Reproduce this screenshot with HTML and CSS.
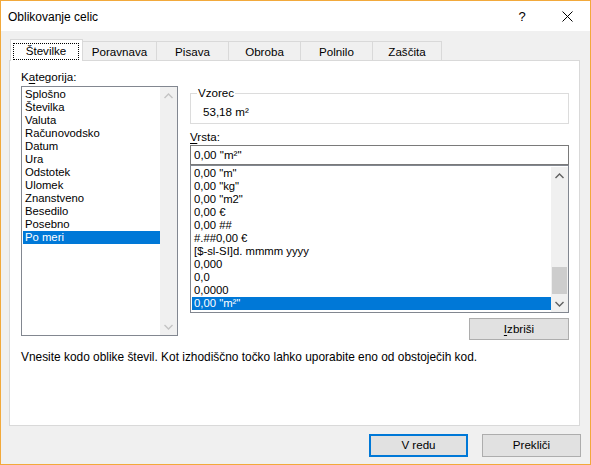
FILE: index.html
```html
<!DOCTYPE html>
<html>
<head>
<meta charset="utf-8">
<link rel="stylesheet" href="styles.css">
</head>
<body>
<div class="window">
  <div class="titlebar">
    <span class="title">Oblikovanje celic</span>
    <span class="help">?</span>
    <span class="close">
      <svg width="11" height="11" viewBox="0 0 11 11"><path d="M0.5 0.5 L10.5 10.5 M10.5 0.5 L0.5 10.5" stroke="#000" stroke-width="1" fill="none"/></svg>
    </span>
  </div>
  <div class="body">
    <div class="tabs">
      <div class="tab active"><span class="focus">Številke</span></div>
      <div class="tab w74">Poravnava</div>
      <div class="tab w72">Pisava</div>
      <div class="tab w72">Obroba</div>
      <div class="tab w72">Polnilo</div>
      <div class="tab w69">Zaščita</div>
    </div>
    <div class="panel">
      <div class="cols">
        <div class="left">
          <div class="label">K<u>a</u>tegorija:</div>
          <div class="listbox cat">
            <div class="items">
              <div class="item">Splošno</div>
              <div class="item">Številka</div>
              <div class="item">Valuta</div>
              <div class="item">Računovodsko</div>
              <div class="item">Datum</div>
              <div class="item">Ura</div>
              <div class="item">Odstotek</div>
              <div class="item">Ulomek</div>
              <div class="item">Znanstveno</div>
              <div class="item">Besedilo</div>
              <div class="item">Posebno</div>
              <div class="item sel">Po meri</div>
            </div>
            <div class="scrollbar">
              <div class="arrow"><svg width="9" height="6" viewBox="0 0 9 6"><path d="M0.5 5 L4.5 1 L8.5 5" stroke="#c4c4c4" stroke-width="1.4" fill="none"/></svg></div>
              <div class="track"></div>
              <div class="arrow"><svg width="9" height="6" viewBox="0 0 9 6"><path d="M0.5 1 L4.5 5 L8.5 1" stroke="#c4c4c4" stroke-width="1.4" fill="none"/></svg></div>
            </div>
          </div>
        </div>
        <div class="right">
          <div class="group">
            <span class="legend">Vzorec</span>
            <div class="sample">53,18 m²</div>
          </div>
          <div class="label vr"><u>V</u>rsta:</div>
          <div class="input">0,00 "m²"</div>
          <div class="listbox fmt">
            <div class="items">
              <div class="item">0,00 "m"</div>
              <div class="item">0,00 "kg"</div>
              <div class="item">0,00 "m2"</div>
              <div class="item">0,00 €</div>
              <div class="item">0,00 ##</div>
              <div class="item">#.##0,00 €</div>
              <div class="item">[$-sl-SI]d. mmmm yyyy</div>
              <div class="item">0,000</div>
              <div class="item">0,0</div>
              <div class="item">0,0000</div>
              <div class="item sel">0,00 "m²"</div>
            </div>
            <div class="scrollbar">
              <div class="arrow"><svg width="9" height="6" viewBox="0 0 9 6"><path d="M0.5 5 L4.5 1 L8.5 5" stroke="#606060" stroke-width="1.4" fill="none"/></svg></div>
              <div class="track end"><div class="thumb"></div></div>
              <div class="arrow"><svg width="9" height="6" viewBox="0 0 9 6"><path d="M0.5 1 L4.5 5 L8.5 1" stroke="#606060" stroke-width="1.4" fill="none"/></svg></div>
            </div>
          </div>
          <div class="btnrow">
            <div class="btn del"><u>I</u>zbriši</div>
          </div>
        </div>
      </div>
      <p class="desc">Vnesite kodo oblike števil. Kot izhodiščno točko lahko uporabite eno od obstoječih kod.</p>
    </div>
    <div class="buttons">
      <div class="btn default">V redu</div>
      <div class="btn">Prekliči</div>
    </div>
  </div>
</div>
</body>
</html>
```
FILE: styles.css
```css
* { box-sizing: border-box; }
html, body { margin: 0; padding: 0; }
body {
  font-family: "Liberation Sans", Arial, sans-serif;
  font-size: 11.6px;
  color: #000;
  background: #f0f0f0;
}
u { text-decoration: underline; text-underline-offset: 2px; }
.window {
  width: 591px;
  height: 465px;
  border: 1px solid #f2a93b;
  background: #f0f0f0;
  display: flex;
  flex-direction: column;
}
.titlebar {
  height: 30px;
  background: #fff;
  display: flex;
  align-items: center;
  flex-shrink: 0;
}
.title {
  margin-left: 7px;
  font-size: 12px;
  flex: 1;
  padding-top: 1px;
}
.help {
  font-size: 13px;
  width: 20px;
  text-align: center;
  margin-right: 30px;
}
.close {
  width: 13px;
  margin-right: 15px;
  display: flex;
  padding-top: 1px;
}
.body {
  flex: 1;
  display: flex;
  flex-direction: column;
}
.tabs {
  display: flex;
  align-items: flex-end;
  margin-top: 7px;
  margin-left: 9px;
  height: 22px;
}
.tab {
  height: 19px;
  border: 1px solid #d9d9d9;
  border-left: none;
  border-bottom: none;
  background: #f0f0f0;
  text-align: center;
  line-height: 16px;
  padding-top: 2px;
}
.w74 { width: 74px; }
.w72 { width: 72px; }
.w69 { width: 69px; }
.tab.active {
  width: 73px;
  height: 22px;
  border-left: 1px solid #d9d9d9;
  background: #fff;
  position: relative;
  z-index: 1;
  margin-bottom: -1px;
  padding: 3px 3px 0 2px;
  text-align: left;
}
.focus {
  display: block;
  height: 17px;
  border: 1px dotted #000;
  line-height: 14px;
  text-align: center;
}
.panel {
  margin-left: 8px;
  width: 571px;
  height: 366px;
  background: #fff;
  border: 1px solid #d9d9d9;
  padding: 8px 0 0 11px;
}
.cols {
  display: grid;
  grid-template-columns: 157px 379px;
  column-gap: 12px;
}
.label {
  height: 16px;
  line-height: 16px;
  margin-bottom: 1px;
}
.listbox {
  display: flex;
  border: 1px solid #828790;
  background: #fff;
}
.listbox.cat { height: 250px; padding: 1px 0 0 1px; }
.listbox.fmt { height: 148px; padding: 1px 0 0 1px; }
.items { flex: 1; }
.item {
  height: 13px;
  line-height: 13px;
  font-size: 11.3px;
  padding-left: 2px;
  white-space: nowrap;
}
.item.sel { background: #0078d7; color: #fff; }
.scrollbar {
  width: 17px;
  background: #f0f0f0;
  display: flex;
  flex-direction: column;
  margin-top: -1px;
}
.listbox.fmt .scrollbar { margin-top: 0; margin-bottom: 0; }
.arrow {
  height: 17px;
  display: flex;
  align-items: center;
  justify-content: center;
}
.track { flex: 1; display: flex; flex-direction: column; justify-content: flex-end; }
.thumb { height: 27px; background: #cdcdcd; margin: 0 1px 1px 1px; }
.right { padding-top: 24px; }
.group {
  position: relative;
  height: 31px;
  border: 1px solid #dcdcdc;
  padding: 10px 0 0 12px;
}
.legend {
  position: absolute;
  left: 6px;
  top: -9px;
  background: #fff;
  padding: 0 1px;
  line-height: 16px;
}
.sample { line-height: 16px; }
.label.vr { margin-top: 5px; margin-bottom: 0; }
.input {
  height: 20px;
  border: 1px solid #7a7a7a;
  line-height: 17px;
  padding-left: 3px;
}
.btnrow {
  display: flex;
  justify-content: flex-end;
  margin-top: 5px;
}
.btn {
  width: 99px;
  height: 22px;
  background: #e1e1e1;
  border: 1px solid #adadad;
  text-align: center;
  line-height: 19px;
}
.btn.del { width: 100px; }
.desc {
  margin: 9px 0 0 0;
  line-height: 16px;
  font-size: 11.9px;
}
.buttons {
  display: flex;
  justify-content: flex-end;
  gap: 14px;
  margin-top: 8px;
  margin-right: 9px;
}
.buttons .btn { height: 23px; line-height: 20px; }
.btn.default { border: 2px solid #0078d7; line-height: 18px; }
```
